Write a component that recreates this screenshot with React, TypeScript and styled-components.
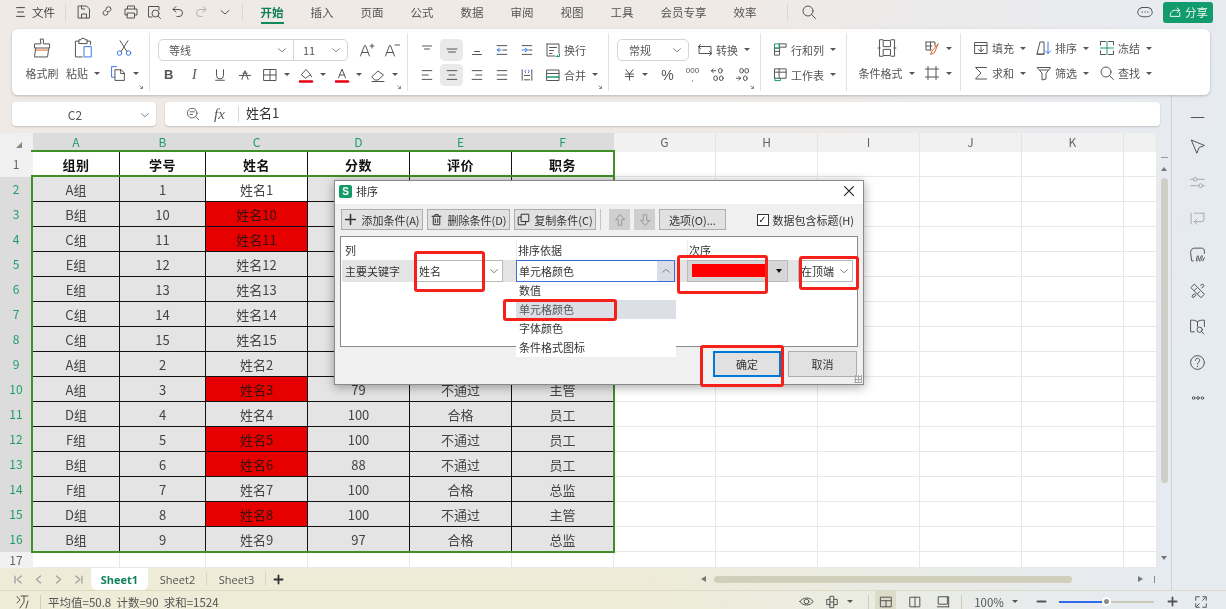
import React from 'react'
import styled, { createGlobalStyle } from 'styled-components'

const GlobalStyle = createGlobalStyle`
  html, body { margin: 0; padding: 0; }
  body { font-family: "Noto Sans CJK SC", "Liberation Sans", sans-serif; color: #444; }
  * { box-sizing: border-box; }
`

const Page = styled.div`
  position: relative;
  width: 1226px;
  height: 609px;
  overflow: hidden;
  display: flex;
  flex-direction: column;
  filter: blur(0.45px);
  background:
    linear-gradient(100deg, rgba(240, 235, 230, 0) 55%, rgba(230, 235, 242, 1) 95%),
    linear-gradient(180deg, #efeae6 0%, #efe8e3 60%, #eeecd6 100%);
`

/* ---------- icons ---------- */

const Svg = styled.svg<{ $size: number }>`
  width: ${p => p.$size}px;
  height: ${p => p.$size}px;
  flex: none;
  fill: none;
  stroke: currentColor;
  stroke-width: 1;
  stroke-linecap: round;
  stroke-linejoin: round;
  * { vector-effect: non-scaling-stroke; }
`

const blue = '#3b78e7'
const red = '#e60012'
const green = '#1a9a6c'
const orange = '#d9662b'

const glyphs: Record<string, React.ReactNode> = {
  menu: <path d="M3 3h9M4 8h7M3 13h9" />,
  save: <><path d="M2.5 2h8l3 3v9h-11z" /><path d="M5.5 14v-4h5v4M5.5 2v3h3" /></>,
  link: <><path d="M7 5.5a2.5 2.5 0 0 1 5-.5c0 1.5-1.2 2.5-2.5 2.5H8" /><path d="M9 8.5a2.5 2.5 0 0 1-5 .5C4 7.5 5.2 6.5 6.5 6.5" /></>,
  print: <><path d="M4.5 5V2h7v3M4.5 11H2V5h12v6h-2.5" /><path d="M4.5 9h7v5h-7z" /></>,
  preview: <><path d="M13 6V2.5H2.5V13H6" /><circle cx="9.5" cy="9.5" r="3.5" /><path d="M12 12l2.5 2.5" /></>,
  undo: <path d="M6 2.5L3 5.5l3 2.5M3 5.5h6a3.5 3.5 0 0 1 0 7H7" />,
  redo: <path d="M10 2.5l3 3-3 2.5M13 5.5H7a3.5 3.5 0 0 0 0 7h2" />,
  chevron: <path d="M4 6.5l4 3.5 4-3.5" />,
  search: <><circle cx="7" cy="7" r="5" /><path d="M10.5 10.5L14.5 14.5" /></>,
  chat: <><path d="M5 3.5h6a4.5 4.5 0 0 1 1 8.8c-1 .7-7 .7-8 0A4.5 4.5 0 0 1 5 3.5z" /><path d="M5 8h.6M7.8 8h.6M10.5 8h.6" /></>,
  share: <path d="M13.5 8.5V13H2.5c0-4 1.5-7 6-7h4M10.5 3.5L13.5 6l-3 2.5" />,
  brush: <><path d="M7 1.5h2v3.5h4.5v3h-11V5H7z" /><path d="M3.5 8L2.5 14.5h9.5l1-6.5" /><path d="M3 9.5h10" stroke={orange} /></>,
  paste: <><path d="M5 3H2.5v11.5h5M11 3h2.5v2.5" /><path d="M5 4.5V2h1.5l.5-1h2l.5 1H11v2.5z" /><path d="M9 7h5v7.5H9z" stroke={blue} /></>,
  cut: <><circle cx="4" cy="12.5" r="2" stroke={blue} /><circle cx="12" cy="12.5" r="2" stroke={blue} /><path d="M5.5 11L11.5 1.5M10.5 11L4.5 1.5" /></>,
  copy: <><path d="M6 1.5H1.5v10H4" stroke={blue} /><path d="M5 4.5h5.5l3 3v7H5z" /><path d="M10 4.5V8h3.5" /></>,
  launcher: <path d="M2 2l6 6M8 3.5V8H3.5" />,
  grow: <path d="M1.5 14L5.5 3.5h1L10.5 14M3 10.5h6M11 4h4M13 2v4" />,
  shrink: <path d="M1.5 14L5.5 3.5h1L10.5 14M3 10.5h6M11 3h4.5" />,
  underline: <path d="M4 2v6.5a4 4 0 0 0 8 0V2M3 14h10" />,
  strike: <path d="M4.5 13L8 3l3.5 10M1.5 8.5h13M5.5 6h5" />,
  border: <path d="M2 2.5h12v11H2zM8 2.5v11M2 8h12" />,
  fill: <><path d="M3.5 7.5L8 2.5l4.5 5L8 11z" /><path d="M12.5 8l1 2" /><path d="M2 14.5h12" stroke={red} strokeWidth="2.5" /></>,
  fontColor: <><path d="M4.5 11L8 2l3.5 9M5.5 8h5" /><path d="M2 14.5h12" stroke={red} strokeWidth="2.5" /></>,
  eraser: <><path d="M2 9.5L8 4l5.5 4-5.5 5H5z" /><path d="M2 14.5h12" /></>,
  alignTop: <path d="M3.5 4h9M5.5 7h5" />,
  alignMid: <path d="M3 7h10M4.5 10h7" />,
  alignBottom: <path d="M5.5 9.5h5M3.5 12.5h9" />,
  indentDec: <><path d="M2.5 3h11M9 8h4.5M2.5 13h11" /><path d="M7 8H2.5M5 6L2.5 8 5 10" stroke={blue} /></>,
  indentInc: <><path d="M2.5 3h11M10 8h3.5M2.5 13h11" /><path d="M2.5 8H8M6 6l2.5 2L6 10" stroke={blue} /></>,
  wrap: <><path d="M2 2h12v9M2 2v12h8M4.5 5.5h7M4.5 8.5h4M4.5 11.5H7" /><path d="M14.5 12v2.5h-3M13 13l-1.5 1.5" stroke={green} /></>,
  left: <path d="M2.5 3h11M2.5 8h7M2.5 13h11" />,
  center: <path d="M2.5 3h11M4.5 8h7M2.5 13h11" />,
  right: <path d="M2.5 3h11M6.5 8h7M2.5 13h11" />,
  justify: <path d="M2.5 3h11M2.5 8h11M2.5 13h11" />,
  distribute: <><path d="M2.5 2v12M13.5 2v12M5 8.5h6M5 13.5h6" /><path d="M6.5 2.5L5.5 4l1 1.5M9.5 2.5L10.5 4l-1 1.5" stroke={blue} /></>,
  merge: <><path d="M2 3h12v10.5H2zM2 6.5h12" /><path d="M2 10h12" stroke={green} strokeWidth="1.5" /></>,
  convert: <path d="M3.5 2.5l-2 2 2 2M1.5 4.5H14V12M12.5 13.5l2-2-2-2M14.5 11.5H2V4.5" />,
  yen: <path d="M3.5 2L8 7.5 12.5 2M3 7.5h10M3 10.5h10M8 7.5V15" />,
  incDec: <><path d="M6 4H1.5M3.5 2L1.5 4l2 2" /><ellipse cx="11" cy="4" rx="2" ry="2.5" /><ellipse cx="6" cy="12" rx="2" ry="2.5" /><ellipse cx="12" cy="12" rx="2" ry="2.5" /></>,
  decDec: <><ellipse cx="7" cy="4" rx="2" ry="2.5" /><ellipse cx="12.5" cy="4" rx="2" ry="2.5" /><path d="M1.5 12H6M4 10l2 2-2 2" /><ellipse cx="11" cy="12" rx="2" ry="2.5" /></>,
  rowCol: <><path d="M7 2h7v3.5H7z" /><path d="M2 6.5h5V14H2zM2 10h5" /><path d="M2 2h5v4.5H2z" stroke={green} /></>,
  sheet: <><path d="M2 2h12v10H2zM2 5.5h12M6.5 2v10" /><path d="M2 11v3.5h6V12" stroke={green} /></>,
  cond: <path d="M5 2H2.5v12H5M11 2h2.5v12H11M1.5 8H3M13 8h1.5M5.5 2.5h5V7h-5zM5.5 9h5v4.5h-5z" />,
  style: <><path d="M2 2h9v4M2 2v8h5M6.5 2v8M2 6h6" /><path d="M14 4L8 11l-1.5 3.5L10 13z" stroke={orange} /></>,
  cropFrame: <path d="M4 1.5v13M12 1.5v13M1.5 4h13M1.5 12h13" />,
  fillDown: <><path d="M2 2.5h12v11H2zM2 5.5h12" /><path d="M8 7v4.5M5.5 9.5L8 11.5l2.5-2" /></>,
  sort: <><path d="M1 14L4 2h4v12zM1 14h7" /><path d="M12 2v11.5M9.5 11l2.500 2.500 2.500-2.500" stroke={blue} /></>,
  freeze: <><path d="M1.5 5V1.5h5M9.5 1.5h5V5M1.5 11v3.5h5M9.5 14.5h5V11" /><path d="M8 1.5v13M1.5 8h13" stroke={green} /></>,
  sum: <path d="M13.5 2.5h-11L8 8l-5.5 6h11" />,
  filter: <path d="M1.5 2.5h13L10 8.500V14l-4 1V8.500zM4 5h8" />,
  dash: <path d="M2 8h12" />,
  cursor: <path d="M2.5 2l12 5-5 2-2 5z" />,
  sliders: <><path d="M1.5 5h3M8 5h6.5M1.5 11h8M13 11h1.5" /><circle cx="6" cy="5" r="1.8" /><circle cx="11" cy="11" r="1.8" /></>,
  flow: <path d="M2 3v10M5 3h9M14 3v6a2 2 0 0 1-2 2H5M7.5 8.500L5 11l2.500 2.500" />,
  ink: <><path d="M4 14H2.5L1.5 6c0-3 2-4 4-4h6c2 0 3 1 3 3v2" /><path d="M7 14c0-3 1-5 1.500-5s.5 5 0 5M10 14c0-2 1-4 2-5s0 5-.5 5M13 14l1.500-3" /></>,
  tools: <path d="M2 5l3-3 9.500 9.500-3 3zM5 8l2-2M8 11l2-2M11 3l2-1 1 1-1 2-1 .5M3 13l2-2 1.500 1.500L4 14.500z" />,
  book: <><path d="M8 3.500C6 2 4 2 1.500 2v11H5M8 3.500C10 2 12 2 14.500 2v6M8 3.500V8" /><circle cx="10" cy="11" r="2.500" /><path d="M12 13l2 2" /></>,
  help: <><circle cx="8" cy="8" r="6.500" /><path d="M6 6a2 2 0 1 1 3.200 1.600C8.400 8.200 8 8.600 8 9.500M8 11.500v.3" /></>,
  dots: <><circle cx="3" cy="8" r="1.500" /><circle cx="8" cy="8" r="1.500" /><circle cx="13" cy="8" r="1.500" /></>,
  statusTag: <path d="M3 2.500L6 6 3 9M7 2h7M10 2v6l-4 6M14 7l-2 7" />,
  eye: <><path d="M1 8c3-5 11-5 14 0-3 5-11 5-14 0z" /><circle cx="8" cy="8" r="2.500" /></>,
  focus: <path d="M6 1.500h4v13H6zM6 5H2v6h4M10 5h4v6h-4M6 8h4" />,
  gridView: <path d="M2 2.500h12v11H2zM2 6.500h12M8 6.500v7" />,
  splitView: <path d="M2.500 2.500h11v11h-11zM8 2.500v11" />,
  pageView: <path d="M3 2h10v8.500H3zM1.500 13.500h13M13 2h1.500v11.500" />,
  minus: <path d="M3 8h10" strokeWidth="1.8" />,
  plus: <path d="M3 8h10M8 3v10" strokeWidth="1.8" />,
  fullscreen: <path d="M2 6V2h4M10 2h4v4M2 10v4h4M14 10v4h-4M3 13l3-3M13 3l-3 3" />,
  zoomFormula: <><circle cx="7" cy="7" r="5.500" /><path d="M4.500 5.500h5M11 11l3.500 3.500M4.500 8.500h3" /></>,
  plusBold: <path d="M2 8h12M8 2v12" strokeWidth="1.6" />,
  trash: <path d="M2.500 4h11M6 4V2h4v2M4 4v10.500h8V4M6.500 7v5M9.500 7v5" />,
  duplicate: <><path d="M5.500 1.500h9v9h-9z" /><path d="M5 5H1.500v9.500h9V11" /></>,
  arrowUp: <path d="M8 2L3 7.500h3V14h4V7.500h3z" />,
  arrowDown: <path d="M8 14L3 8.500h3V2h4v6.500h3z" />,
  close: <path d="M3 3l10 10M13 3L3 13" strokeWidth="1.2" />,
  navFirst: <path d="M3 3v10M12 3L6 8l6 5" strokeWidth="1.3" />,
  navPrev: <path d="M11 3L5 8l6 5" strokeWidth="1.3" />,
  navNext: <path d="M5 3l6 5-6 5" strokeWidth="1.3" />,
  navLast: <path d="M13 3v10M4 3l6 5-6 5" strokeWidth="1.3" />,
}

function Icon({ name, size = 16 }: { name: string; size?: number }) {
  return <Svg $size={size} viewBox="0 0 16 16">{glyphs[name]}</Svg>
}

const Caret = styled.span`
  flex: none;
  width: 0;
  height: 0;
  margin-left: 3px;
  border: 3px solid transparent;
  border-top: 3px solid #555;
  border-bottom: 0;
`

/* ---------- title bar ---------- */

const TitleBar = styled.header`
  height: 29px;
  flex: none;
  display: flex;
  align-items: center;
  padding: 0 13px 5px 14px;
  font-size: 11.5px;
  color: #555;
`

const FileMenu = styled.div`
  width: 42px;
  display: flex;
  align-items: center;
  gap: 4px;
  color: #444;
  white-space: nowrap;
`

const TitleSep = styled.span<{ $l: number; $r: number }>`
  flex: none;
  width: 1px;
  height: 17px;
  margin: 0 ${p => p.$r}px 0 ${p => p.$l}px;
  background: #dbd6d2;
`

const QuickBtn = styled.span<{ $dim?: boolean }>`
  width: 23.5px;
  display: flex;
  justify-content: center;
  color: ${p => (p.$dim ? '#b5b5b5' : '#555')};
`

const MenuTab = styled.span<{ $active?: boolean }>`
  position: relative;
  margin-right: 27px;
  white-space: nowrap;
  font-size: 11.5px;
  line-height: 18px;
  color: ${p => (p.$active ? '#0f7f59' : '#555')};
  font-weight: ${p => (p.$active ? 700 : 400)};
  &::after {
    content: '';
    display: ${p => (p.$active ? 'block' : 'none')};
    position: absolute;
    left: 0;
    right: 0;
    bottom: -3px;
    height: 2px;
    background: #0f8a60;
  }
`

const TitleRight = styled.div`
  margin-left: auto;
  display: flex;
  align-items: center;
  gap: 10px;
  color: #555;
`

const ShareButton = styled.button`
  width: 50px;
  height: 21px;
  border: 0;
  border-radius: 3px;
  background: #129b6c;
  color: #e9f7f1;
  display: flex;
  align-items: center;
  justify-content: center;
  gap: 3px;
  padding: 0;
  font: inherit;
  font-size: 11.5px;
`

/* ---------- ribbon ---------- */

const Ribbon = styled.section`
  flex: none;
  height: 66px;
  margin: 0 16px 0 12px;
  display: flex;
  background: #fff;
  border-radius: 6px;
  box-shadow: 0 1px 3px rgba(0, 0, 0, 0.22);
  font-size: 11px;
  color: #555;
  position: relative;
  z-index: 2;
`

const Group = styled.div<{ $w: number; $last?: boolean }>`
  position: relative;
  flex: none;
  width: ${p => p.$w}px;
  margin: 4px 0;
  padding-top: 4px;
  border-right: ${p => (p.$last ? 'none' : '1px solid #e2e2e2')};
`

const GroupGrid = styled(Group)<{ $cols: string; $pad: number; $gap?: number }>`
  display: grid;
  grid-template-columns: ${p => p.$cols};
  grid-template-rows: 25px 25px;
  column-gap: ${p => p.$gap ?? 0}px;
  padding-left: ${p => p.$pad}px;
`

const ToolRow = styled.div<{ $pad?: number }>`
  height: 25px;
  display: flex;
  align-items: center;
  padding-left: ${p => p.$pad ?? 0}px;
`

const Tool = styled.div<{ $w?: number; $l?: number; $active?: boolean; $start?: boolean }>`
  flex: none;
  width: ${p => (p.$w ? `${p.$w}px` : 'auto')};
  height: 22px;
  margin-left: ${p => p.$l ?? 0}px;
  display: flex;
  align-items: center;
  justify-content: ${p => (p.$start ? 'flex-start' : 'center')};
  gap: 3px;
  white-space: nowrap;
  border-radius: 5px;
  border-left: 1.5px solid transparent;
  border-right: 1.5px solid transparent;
  background-clip: padding-box;
  background-color: ${p => (p.$active ? '#e9e9e9' : 'transparent')};
`

const Launcher = styled.span`
  position: absolute;
  right: 3px;
  bottom: -1px;
  display: flex;
  color: #888;
`

const FontBox = styled.div<{ $w: number; $l: number }>`
  flex: none;
  width: ${p => p.$w}px;
  height: 22px;
  margin-left: ${p => p.$l}px;
  display: flex;
  align-items: center;
  border: 1px solid #d4d4d4;
  border-radius: 5px;
  color: #555;
`

const BoxPart = styled.div<{ $w?: number; $pad: number; $split?: boolean }>`
  flex: ${p => (p.$w ? 'none' : 1)};
  width: ${p => (p.$w ? `${p.$w}px` : 'auto')};
  height: 100%;
  display: flex;
  align-items: center;
  justify-content: space-between;
  padding: 0 4px 0 ${p => p.$pad}px;
  border-left: ${p => (p.$split ? '1px solid #d4d4d4' : 'none')};
  color: #888;
  span { color: #555; }
`

const BoldMark = styled.span`
  font: 700 13px "Liberation Sans", sans-serif;
`

const ItalicMark = styled.span`
  font: italic 14px "Liberation Serif", serif;
`

const Percent = styled.span`
  font: 14px "Liberation Sans", sans-serif;
`

const ThousandMark = styled.span`
  font: 8px/8px "Liberation Sans", sans-serif;
  text-align: center;
`

/* ---------- formula row ---------- */

const Body = styled.div`
  flex: 1;
  display: flex;
  min-height: 0;
`

const Main = styled.div`
  width: 1171px;
  display: flex;
  flex-direction: column;
`

const FormulaRow = styled.div`
  flex: none;
  height: 24px;
  margin: 7px 11px 7px 12px;
  display: flex;
  gap: 9px;
`

const NameBox = styled.div`
  width: 144px;
  position: relative;
  display: flex;
  align-items: center;
  justify-content: center;
  padding-right: 18px;
  background: #fff;
  border-radius: 4px;
  box-shadow: 0 1px 2px rgba(0, 0, 0, 0.18);
  font-size: 12px;
  color: #555;
`

const NameChevron = styled.span`
  position: absolute;
  right: 4px;
  top: 6px;
  display: flex;
  color: #888;
`

const FormulaInput = styled.div`
  flex: 1;
  display: flex;
  align-items: center;
  padding-left: 21px;
  background: #fff;
  border-radius: 4px;
  box-shadow: 0 1px 2px rgba(0, 0, 0, 0.18);
  color: #666;
`

const FxMark = styled.span`
  width: 24px;
  margin-left: 14px;
  font: italic 15px "Liberation Serif", serif;
  color: #555;
`

const FormulaSep = styled.span`
  width: 1px;
  height: 16px;
  margin-right: 7px;
  background: #d8d8d8;
`

const FormulaText = styled.span`
  padding-bottom: 3px;
  font-size: 13px;
  color: #333;
`

/* ---------- sheet ---------- */

const SheetWrap = styled.div`
  flex: none;
  height: 435px;
  display: flex;
`

const SheetGrid = styled.div`
  position: relative;
  width: 1157px;
  background: #fff;
  display: grid;
  grid-template-columns: 33px 87px 86px repeat(9, 102px) 33px;
  grid-template-rows: 19px repeat(16, 25px) 16px;
  overflow: hidden;
`

const Corner = styled.div`
  background: #f0f0f0;
  display: flex;
  align-items: flex-end;
  justify-content: center;
  padding: 0 0 4px 4px;
  &::after {
    content: '';
    border: 3px solid transparent;
    border-right-color: #888;
    border-bottom-color: #888;
  }
`

const ColHead = styled.div<{ $on: boolean }>`
  display: flex;
  align-items: center;
  justify-content: center;
  padding-bottom: 2px;
  font-size: 12px;
  background: ${p => (p.$on ? '#dcdcdc' : '#f1f1f1')};
  color: ${p => (p.$on ? '#1f9c6e' : '#666')};
  border-right: 1px solid ${p => (p.$on ? '#dcdcdc' : '#e4e4e4')};
`

const RowHead = styled.div<{ $on: boolean }>`
  display: flex;
  align-items: center;
  justify-content: center;
  padding: 0 1px 2px 0;
  font-size: 12px;
  background: ${p => (p.$on ? '#dcdcdc' : '#f1f1f1')};
  color: ${p => (p.$on ? '#1f9c6e' : '#666')};
`

const cellBackgrounds = { head: '#fff', plain: '#e4e4e4', white: '#fff', red: '#e60000', blank: '#fff' }

const Cell = styled.div<{ $tone: keyof typeof cellBackgrounds }>`
  display: flex;
  align-items: center;
  justify-content: center;
  white-space: nowrap;
  font-size: 13px;
  font-weight: ${p => (p.$tone === 'head' ? 700 : 400)};
  letter-spacing: ${p => (p.$tone === 'head' ? '0.5px' : 0)};
  color: ${p => (p.$tone === 'head' ? '#111' : p.$tone === 'red' ? '#3a1010' : '#444')};
  background: ${p => cellBackgrounds[p.$tone]};
  border-right: 1px solid ${p => (p.$tone === 'blank' ? '#e8e8e8' : '#111')};
  border-bottom: 1px solid ${p => (p.$tone === 'blank' ? '#e8e8e8' : '#111')};
`

const HeaderOutline = styled.div`
  position: absolute;
  left: 31px;
  top: 17px;
  width: 584px;
  height: 26px;
  border-top: 2px solid #3f8f28;
  border-right: 2px solid #3f8f28;
`

const RangeOutline = styled.div`
  position: absolute;
  left: 31px;
  top: 42px;
  width: 584px;
  height: 378px;
  border: 2.5px solid #3f8f28;
`

const VScroll = styled.div`
  width: 14px;
  display: flex;
  flex-direction: column;
  align-items: center;
  color: #888;
`

const ScrollDash = styled.span`
  width: 7px;
  height: 1px;
  margin-top: 24px;
  background: #999;
`

const ScrollArrow = styled.span<{ $down?: boolean }>`
  width: 0;
  height: 0;
  margin-top: ${p => (p.$down ? 'auto' : '9px')};
  margin-bottom: ${p => (p.$down ? '8px' : 0)};
  border: 3.5px solid transparent;
  border-top: ${p => (p.$down ? '4px solid #777' : 0)};
  border-bottom: ${p => (p.$down ? 0 : '4px solid #777')};
`

const ScrollThumb = styled.span`
  width: 7px;
  height: 305px;
  margin-top: 7px;
  border-radius: 4px;
  background: #cfcfc8;
`

/* ---------- sheet tabs ---------- */

const TabsBar = styled.div`
  flex: none;
  height: 22px;
  display: flex;
  align-items: center;
  padding-left: 8px;
  font-size: 11px;
  color: #555;
`

const NavBtn = styled.span`
  width: 20px;
  display: flex;
  justify-content: center;
  color: #a0a0a0;
`

const SheetTab = styled.div<{ $active?: boolean; $sep?: boolean }>`
  width: ${p => (p.$active ? 57 : 59)}px;
  height: 100%;
  display: flex;
  align-items: center;
  justify-content: center;
  margin-left: ${p => (p.$active ? '3px' : 0)};
  font-family: "Open Sans", sans-serif;
  font-weight: ${p => (p.$active ? 700 : 400)};
  color: ${p => (p.$active ? '#12805c' : '#555')};
  background: ${p => (p.$active ? '#fff' : 'transparent')};
  border-radius: 0 0 6px 6px;
  position: relative;
  &::after {
    content: '';
    display: ${p => (p.$sep ? 'block' : 'none')};
    position: absolute;
    right: 0;
    top: 4px;
    bottom: 4px;
    width: 1px;
    background: #d9d4c8;
  }
`

const AddSheet = styled.span`
  margin-left: 2px;
  width: 20px;
  display: flex;
  justify-content: center;
  color: #333;
`

const HScroll = styled.div`
  margin-left: auto;
  width: 476px;
  display: flex;
  align-items: center;
  color: #777;
`

const HArrow = styled.span<{ $right?: boolean }>`
  flex: none;
  width: 0;
  height: 0;
  margin: ${p => (p.$right ? '0 0 0 6px' : '0 8px 0 6px')};
  border: 3.5px solid transparent;
  border-left: ${p => (p.$right ? '5px solid #777' : 0)};
  border-right: ${p => (p.$right ? 0 : '5px solid #777')};
`

const HTrack = styled.div`
  width: 418px;
  display: flex;
`

const HThumb = styled.span`
  width: 358px;
  height: 7px;
  border-radius: 4px;
  background: #cfcfbb;
`

const HEnd = styled.span`
  width: 1px;
  height: 7px;
  margin-left: 11px;
  background: #888;
`

/* ---------- right sidebar ---------- */

const Sidebar = styled.aside`
  flex: 1;
  border-left: 1px solid #d4d2cc;
  display: flex;
  flex-direction: column;
  align-items: center;
  padding: 11px 3px 0 0;
  color: #555;
`

const SideBtn = styled.span<{ $h: number; $dim?: boolean }>`
  height: ${p => p.$h}px;
  display: flex;
  align-items: center;
  justify-content: center;
  color: ${p => (p.$dim ? '#aaa' : '#555')};
`

/* ---------- status bar ---------- */

const StatusBar = styled.footer`
  flex: none;
  height: 19px;
  display: flex;
  align-items: center;
  padding: 0 14px;
  font-size: 11.5px;
  color: #555;
  border-top: 1px solid #dcdac4;
`

const StatusSep = styled.span<{ $l: number; $r: number }>`
  flex: none;
  width: 1px;
  height: 14px;
  margin: 3px ${p => p.$r}px 0 ${p => p.$l}px;
  background: #cfcdb8;
`

const StatusText = styled.span`
  padding-top: 3px;
  white-space: pre;
`

const StatusTag = styled.span`
  display: flex;
  padding-top: 3px;
`

const StatusRight = styled.div`
  margin-left: auto;
  display: flex;
  align-items: center;
  height: 100%;
`

const StatusCell = styled.span<{ $w: number; $active?: boolean }>`
  flex: none;
  width: ${p => p.$w}px;
  height: 100%;
  padding-top: 3px;
  display: flex;
  align-items: center;
  justify-content: center;
  background: ${p => (p.$active ? '#dcdcc8' : 'transparent')};
  gap: 5px;
`

const ZoomSlider = styled.div`
  position: relative;
  width: 95px;
  height: 2px;
  margin: 3px 0 0 7px;
  background: linear-gradient(90deg, #2f6bed 0 50%, #c9c9b8 50% 100%);
`

const ZoomKnob = styled.span`
  position: absolute;
  left: 43px;
  top: -4px;
  width: 9px;
  height: 9px;
  border-radius: 50%;
  background: #8b8b8b;
  border: 2px solid #fff;
`

/* ---------- dialog ---------- */

const Dialog = styled.div`
  position: absolute;
  left: 334px;
  top: 180px;
  width: 530px;
  height: 205px;
  z-index: 5;
  display: flex;
  flex-direction: column;
  background: #f0f0f0;
  border: 1px solid #8a8a8a;
  box-shadow: 0 2px 10px rgba(0, 0, 0, 0.35);
  font-size: 11px;
  color: #333;
`

const DialogTitle = styled.div`
  flex: none;
  height: 23px;
  display: flex;
  align-items: center;
  padding: 0 5px 3px 4px;
  background: #fff;
  gap: 4px;
  color: #333;
`

const AppLogo = styled.span`
  width: 13px;
  height: 13px;
  border-radius: 2px;
  background: #149a66;
  color: #fff;
  display: flex;
  align-items: center;
  justify-content: center;
  font: 700 10px "Liberation Sans", sans-serif;
`

const CloseBtn = styled.span`
  margin-left: auto;
  margin-right: 2px;
  display: flex;
  color: #222;
`

const DialogBar = styled.div`
  flex: none;
  height: 21px;
  margin-top: 5px;
  padding: 0 9px 0 6px;
  display: flex;
  align-items: stretch;
  gap: 4px;
`

const BarButton = styled.div<{ $w: number; $disabled?: boolean }>`
  flex: none;
  width: ${p => p.$w}px;
  display: flex;
  align-items: center;
  justify-content: center;
  gap: 4px;
  white-space: nowrap;
  background: ${p => (p.$disabled ? '#cfcfcf' : '#e1e1e1')};
  border: 1px solid ${p => (p.$disabled ? '#cfcfcf' : '#adadad')};
  color: ${p => (p.$disabled ? '#9a9a9a' : '#333')};
`

const BarSep = styled.span`
  flex: none;
  width: 1px;
  margin: 0 4px 0 0;
  background: #c4c4c4;
`

const CheckLabel = styled.label`
  margin-left: auto;
  display: flex;
  align-items: center;
  gap: 4px;
  white-space: nowrap;
`

const CheckBox = styled.span`
  width: 12px;
  height: 12px;
  border: 1px solid #333;
  background: #fff;
  display: flex;
  align-items: center;
  justify-content: center;
  color: #222;
  font: 10px "DejaVu Sans", sans-serif;
`

const Panel = styled.div`
  flex: none;
  height: 111px;
  margin: 6px 5px 0 5px;
  background: #fff;
  border: 1px solid #8a8a8a;
`

const PanelHead = styled.div`
  height: 23px;
  display: grid;
  grid-template-columns: 175px 171px 1fr;
  align-items: center;
  padding-top: 2px;
`

const PanelHeadCell = styled.span`
  height: 100%;
  display: flex;
  align-items: center;
  padding-left: 1px;
  padding-top: 1px;
  border-left: 1px solid #ededed;
  &:first-child { border-left: 0; padding-left: 4px; }
`

const SortRow = styled.div`
  height: 22px;
  margin: 0 5px 0 1px;
  display: flex;
  background: #e4e4e4;
`

const SortLabel = styled.span`
  flex: none;
  width: 74px;
  padding: 0 0 1px 3px;
  display: flex;
  align-items: center;
`

const SelectField = styled.div<{ $w: number; $l: number; $focus?: boolean; $gray?: boolean }>`
  position: relative;
  flex: none;
  width: ${p => p.$w}px;
  margin-left: ${p => p.$l}px;
  display: flex;
  align-items: center;
  padding: 0 0 1px 2px;
  background: ${p => (p.$gray ? '#d6d6d6' : '#fff')};
  border: 1px solid ${p => (p.$focus ? '#3b6fd4' : '#b9b9b9')};
`

const SelectArrow = styled.span<{ $shade?: boolean }>`
  position: absolute;
  right: 0;
  top: 0;
  bottom: 0;
  width: 17px;
  display: flex;
  align-items: center;
  justify-content: center;
  color: #888;
  background: ${p => (p.$shade ? '#d9dde8' : 'transparent')};
`

const FlippedChevron = styled.span`
  display: flex;
  transform: rotate(180deg);
`

const ColorSwatch = styled.span`
  width: 76px;
  height: 13px;
  margin-left: 2px;
  background: #fe0000;
`

const SolidArrow = styled(SelectArrow)`
  &::after {
    content: '';
    border: 3.5px solid transparent;
    border-top: 4px solid #111;
    border-bottom: 0;
  }
`

const OptionList = styled.ul`
  position: absolute;
  left: -1px;
  top: 21px;
  width: 160px;
  margin: 0;
  padding: 0;
  list-style: none;
  background: #fff;
  z-index: 1;
`

const OptionItem = styled.li<{ $hover?: boolean }>`
  height: 19px;
  padding: 0 0 2px 3px;
  display: flex;
  align-items: center;
  background: ${p => (p.$hover ? '#dcdfe6' : 'transparent')};
  color: ${p => (p.$hover ? '#555' : '#333')};
  &:first-child { height: 18px; }
`

const DialogActions = styled.div`
  flex: none;
  height: 26px;
  margin-top: 4px;
  padding-right: 6px;
  display: flex;
  justify-content: flex-end;
  gap: 7px;
`

const ActionButton = styled.button<{ $primary?: boolean }>`
  width: ${p => (p.$primary ? 68 : 69)}px;
  padding: 0;
  background: #e1e1e1;
  border: ${p => (p.$primary ? '2px solid #0078d7' : '1px solid #adadad')};
  color: #333;
  font: inherit;
`

const Grip = styled.span`
  position: absolute;
  right: 1px;
  bottom: 1px;
  width: 8px;
  height: 8px;
  background: radial-gradient(circle, #a8a8a8 1px, transparent 1.2px) 0 0 / 3px 3px;
`

const Mark = styled.span<{ $x: number; $y: number; $w: number; $h: number }>`
  position: absolute;
  left: ${p => p.$x - 335}px;
  top: ${p => p.$y - 181}px;
  width: ${p => p.$w}px;
  height: ${p => p.$h}px;
  border: 3px solid #f5201a;
  border-radius: 3px;
  pointer-events: none;
  z-index: 3;
`

/* ---------- data ---------- */

const columns = ['A', 'B', 'C', 'D', 'E', 'F', 'G', 'H', 'I', 'J', 'K', '']

const headers = ['组别', '学号', '姓名', '分数', '评价', '职务']

const rows: string[][] = [
  ['A组', '1', '姓名1', '', '', ''],
  ['B组', '10', '姓名10', '', '', ''],
  ['C组', '11', '姓名11', '', '', ''],
  ['E组', '12', '姓名12', '', '', ''],
  ['E组', '13', '姓名13', '', '', ''],
  ['C组', '14', '姓名14', '', '', ''],
  ['C组', '15', '姓名15', '', '', ''],
  ['A组', '2', '姓名2', '', '', ''],
  ['A组', '3', '姓名3', '79', '不通过', '主管'],
  ['D组', '4', '姓名4', '100', '合格', '员工'],
  ['F组', '5', '姓名5', '100', '不通过', '员工'],
  ['B组', '6', '姓名6', '88', '不通过', '员工'],
  ['F组', '7', '姓名7', '100', '合格', '总监'],
  ['D组', '8', '姓名8', '100', '不通过', '主管'],
  ['B组', '9', '姓名9', '97', '合格', '总监'],
]

const redRows = [3, 4, 10, 12, 13, 15]

const menuTabs = ['开始', '插入', '页面', '公式', '数据', '审阅', '视图', '工具', '会员专享', '效率']

const sideIcons: [string, number, boolean?][] = [
  ['dash', 22],
  ['cursor', 36],
  ['sliders', 36, true],
  ['flow', 36, true],
  ['ink', 36],
  ['tools', 36],
  ['book', 36],
  ['help', 36],
  ['dots', 36],
]

function Sheet() {
  return (
    <SheetGrid>
      <Corner />
      {columns.map((c, i) => <ColHead key={i} $on={i < 6}>{c}</ColHead>)}

      <RowHead $on={false}>1</RowHead>
      {columns.map((_, i) =>
        i < 6
          ? <Cell key={i} $tone="head">{headers[i]}</Cell>
          : <Cell key={i} $tone="blank" />
      )}

      {rows.map((row, r) => {
        const rowNo = r + 2
        return (
          <React.Fragment key={rowNo}>
            <RowHead $on>{rowNo}</RowHead>
            {columns.map((_, i) => {
              if (i >= 6) return <Cell key={i} $tone="blank" />
              let tone: 'plain' | 'white' | 'red' = 'plain'
              if (i === 2 && rowNo === 2) tone = 'white'
              if (i === 2 && redRows.includes(rowNo)) tone = 'red'
              return <Cell key={i} $tone={tone}>{row[i]}</Cell>
            })}
          </React.Fragment>
        )
      })}

      <RowHead $on={false}>17</RowHead>
      {columns.map((_, i) => <Cell key={i} $tone="blank" />)}

      <HeaderOutline />
      <RangeOutline />
    </SheetGrid>
  )
}

function SortDialog() {
  return (
    <Dialog>
      <DialogTitle>
        <AppLogo>S</AppLogo>
        排序
        <CloseBtn><Icon name="close" size={14} /></CloseBtn>
      </DialogTitle>

      <DialogBar>
        <BarButton $w={82}><Icon name="plusBold" size={13} />添加条件(A)</BarButton>
        <BarButton $w={83}><Icon name="trash" size={13} />删除条件(D)</BarButton>
        <BarButton $w={82}><Icon name="duplicate" size={13} />复制条件(C)</BarButton>
        <BarSep />
        <BarButton $w={21} $disabled><Icon name="arrowUp" size={14} /></BarButton>
        <BarButton $w={21} $disabled><Icon name="arrowDown" size={14} /></BarButton>
        <BarButton $w={67}>选项(O)...</BarButton>
        <CheckLabel><CheckBox>✓</CheckBox>数据包含标题(H)</CheckLabel>
      </DialogBar>

      <Panel>
        <PanelHead>
          <PanelHeadCell>列</PanelHeadCell>
          <PanelHeadCell>排序依据</PanelHeadCell>
          <PanelHeadCell>次序</PanelHeadCell>
        </PanelHead>
        <SortRow>
          <SortLabel>主要关键字</SortLabel>
          <SelectField $w={87} $l={0}>
            姓名
            <SelectArrow><Icon name="chevron" size={14} /></SelectArrow>
          </SelectField>
          <SelectField $w={159} $l={13} $focus>
            单元格颜色
            <SelectArrow $shade><FlippedChevron><Icon name="chevron" size={14} /></FlippedChevron></SelectArrow>
            <OptionList>
              <OptionItem>数值</OptionItem>
              <OptionItem $hover>单元格颜色</OptionItem>
              <OptionItem>字体颜色</OptionItem>
              <OptionItem>条件格式图标</OptionItem>
            </OptionList>
          </SelectField>
          <SelectField $w={101} $l={12} $gray>
            <ColorSwatch />
            <SolidArrow />
          </SelectField>
          <SelectField $w={55} $l={10}>
            在顶端
            <SelectArrow><Icon name="chevron" size={14} /></SelectArrow>
          </SelectField>
        </SortRow>
      </Panel>

      <DialogActions>
        <ActionButton $primary>确定</ActionButton>
        <ActionButton>取消</ActionButton>
      </DialogActions>
      <Grip />

      <Mark $x={414} $y={251} $w={71} $h={41} />
      <Mark $x={677} $y={255} $w={91} $h={39} />
      <Mark $x={799} $y={256} $w={60} $h={34} />
      <Mark $x={503} $y={299} $w={114} $h={22} />
      <Mark $x={700} $y={345} $w={84} $h={42} />
    </Dialog>
  )
}

export default function App() {
  return (
    <Page>
      <GlobalStyle />

      <TitleBar>
        <FileMenu><Icon name="menu" size={14} />文件</FileMenu>
        <TitleSep $l={9} $r={6} />
        <QuickBtn><Icon name="save" /></QuickBtn>
        <QuickBtn><Icon name="link" /></QuickBtn>
        <QuickBtn><Icon name="print" /></QuickBtn>
        <QuickBtn><Icon name="preview" /></QuickBtn>
        <QuickBtn><Icon name="undo" /></QuickBtn>
        <QuickBtn $dim><Icon name="redo" /></QuickBtn>
        <QuickBtn><Icon name="chevron" /></QuickBtn>
        <TitleSep $l={5} $r={18} />
        {menuTabs.map((t, i) => <MenuTab key={t} $active={i === 0}>{t}</MenuTab>)}
        <TitleSep $l={3} $r={10} />
        <QuickBtn><Icon name="search" /></QuickBtn>
        <TitleRight>
          <Icon name="chat" />
          <ShareButton><Icon name="share" size={14} />分享</ShareButton>
        </TitleRight>
      </TitleBar>

      <Ribbon>
        <GroupGrid $w={138} $cols="36px 34px 36px" $pad={12} $gap={6}>
          <Tool><Icon name="brush" size={22} /></Tool>
          <Tool><Icon name="paste" size={22} /></Tool>
          <Tool><Icon name="cut" size={18} /></Tool>
          <Tool>格式刷</Tool>
          <Tool>粘贴<Caret /></Tool>
          <Tool><Icon name="copy" size={17} /><Caret /></Tool>
          <Launcher><Icon name="launcher" size={7} /></Launcher>
        </GroupGrid>

        <Group $w={258}>
          <ToolRow>
            <FontBox $w={190} $l={8}>
              <BoxPart $pad={10}><span>等线</span><Icon name="chevron" size={14} /></BoxPart>
              <BoxPart $w={54} $pad={9} $split><span>11</span><Icon name="chevron" size={14} /></BoxPart>
            </FontBox>
            <Tool $w={25} $l={6}><Icon name="grow" /></Tool>
            <Tool $w={25}><Icon name="shrink" /></Tool>
          </ToolRow>
          <ToolRow $pad={6}>
            <Tool $w={25.5}><BoldMark>B</BoldMark></Tool>
            <Tool $w={25.5}><ItalicMark>I</ItalicMark></Tool>
            <Tool $w={25.5}><Icon name="underline" size={14} /></Tool>
            <Tool $w={25.5}><Icon name="strike" size={14} /></Tool>
            <Tool $w={36}><Icon name="border" /><Caret /></Tool>
            <Tool $w={36}><Icon name="fill" /><Caret /></Tool>
            <Tool $w={36}><Icon name="fontColor" /><Caret /></Tool>
            <Tool $w={36}><Icon name="eraser" /><Caret /></Tool>
          </ToolRow>
          <Launcher><Icon name="launcher" size={7} /></Launcher>
        </Group>

        <Group $w={201}>
          <ToolRow $pad={6}>
            <Tool $w={25}><Icon name="alignTop" /></Tool>
            <Tool $w={25} $active><Icon name="alignMid" /></Tool>
            <Tool $w={25}><Icon name="alignBottom" /></Tool>
            <Tool $w={25}><Icon name="indentDec" size={14} /></Tool>
            <Tool $w={25}><Icon name="indentInc" size={14} /></Tool>
            <Tool $l={5}><Icon name="wrap" />换行</Tool>
          </ToolRow>
          <ToolRow $pad={6}>
            <Tool $w={25}><Icon name="left" size={14} /></Tool>
            <Tool $w={25} $active><Icon name="center" size={14} /></Tool>
            <Tool $w={25}><Icon name="right" size={14} /></Tool>
            <Tool $w={25}><Icon name="justify" size={14} /></Tool>
            <Tool $w={25}><Icon name="distribute" size={14} /></Tool>
            <Tool $l={5}><Icon name="merge" />合并<Caret /></Tool>
          </ToolRow>
          <Launcher><Icon name="launcher" size={7} /></Launcher>
        </Group>

        <Group $w={152}>
          <ToolRow>
            <FontBox $w={72} $l={8}>
              <BoxPart $pad={11}><span>常规</span><Icon name="chevron" size={14} /></BoxPart>
            </FontBox>
            <Tool $l={7}><Icon name="convert" />转换<Caret /></Tool>
          </ToolRow>
          <ToolRow $pad={6}>
            <Tool $w={40}><Icon name="yen" size={13} /><Caret /></Tool>
            <Tool $w={25}><Percent>%</Percent></Tool>
            <Tool $w={25}><ThousandMark>000<br />,</ThousandMark></Tool>
            <Tool $w={25}><Icon name="incDec" size={15} /></Tool>
            <Tool $w={25}><Icon name="decDec" size={15} /></Tool>
          </ToolRow>
          <Launcher><Icon name="launcher" size={7} /></Launcher>
        </Group>

        <Group $w={86}>
          <ToolRow $pad={11}>
            <Tool $start><Icon name="rowCol" size={15} />行和列<Caret /></Tool>
          </ToolRow>
          <ToolRow $pad={11}>
            <Tool $start><Icon name="sheet" size={15} />工作表<Caret /></Tool>
          </ToolRow>
        </Group>

        <GroupGrid $w={114} $cols="65px 38px" $pad={7}>
          <Tool><Icon name="cond" size={22} /></Tool>
          <Tool><Icon name="style" /><Caret /></Tool>
          <Tool>条件格式<Caret /></Tool>
          <Tool><Icon name="cropFrame" /><Caret /></Tool>
        </GroupGrid>

        <GroupGrid $w={249} $cols="63px 63px 63px" $pad={11} $last>
          <Tool $start><Icon name="fillDown" />填充<Caret /></Tool>
          <Tool $start><Icon name="sort" />排序<Caret /></Tool>
          <Tool $start><Icon name="freeze" />冻结<Caret /></Tool>
          <Tool $start><Icon name="sum" />求和<Caret /></Tool>
          <Tool $start><Icon name="filter" />筛选<Caret /></Tool>
          <Tool $start><Icon name="search" />查找<Caret /></Tool>
        </GroupGrid>
      </Ribbon>

      <Body>
        <Main>
          <FormulaRow>
            <NameBox>C2<NameChevron><Icon name="chevron" size={14} /></NameChevron></NameBox>
            <FormulaInput>
              <Icon name="zoomFormula" size={14} />
              <FxMark>fx</FxMark>
              <FormulaSep />
              <FormulaText>姓名1</FormulaText>
            </FormulaInput>
          </FormulaRow>

          <SheetWrap>
            <Sheet />
            <VScroll>
              <ScrollDash />
              <ScrollArrow />
              <ScrollThumb />
              <ScrollArrow $down />
            </VScroll>
          </SheetWrap>

          <TabsBar>
            <NavBtn><Icon name="navFirst" size={11} /></NavBtn>
            <NavBtn><Icon name="navPrev" size={11} /></NavBtn>
            <NavBtn><Icon name="navNext" size={11} /></NavBtn>
            <NavBtn><Icon name="navLast" size={11} /></NavBtn>
            <SheetTab $active>Sheet1</SheetTab>
            <SheetTab $sep>Sheet2</SheetTab>
            <SheetTab $sep>Sheet3</SheetTab>
            <AddSheet><Icon name="plus" size={13} /></AddSheet>
            <HScroll>
              <HArrow />
              <HTrack><HThumb /></HTrack>
              <HArrow $right />
              <HEnd />
            </HScroll>
          </TabsBar>
        </Main>

        <Sidebar>
          {sideIcons.map(([name, h, dim]) => (
            <SideBtn key={name} $h={h} $dim={dim}><Icon name={name} size={name === 'dots' ? 14 : 17} /></SideBtn>
          ))}
        </Sidebar>
      </Body>

      <StatusBar>
        <StatusTag><Icon name="statusTag" /></StatusTag>
        <StatusSep $l={10} $r={7} />
        <StatusText>平均值=50.8  计数=90  求和=1524</StatusText>
        <StatusRight>
          <StatusCell $w={18}><Icon name="eye" size={15} /></StatusCell>
          <StatusCell $w={47}><Icon name="focus" size={14} /><Caret /></StatusCell>
          <StatusSep $l={6} $r={6} />
          <StatusCell $w={21} $active><Icon name="gridView" size={14} /></StatusCell>
          <StatusCell $w={38}><Icon name="splitView" size={14} /></StatusCell>
          <StatusCell $w={18}><Icon name="pageView" size={14} /></StatusCell>
          <StatusSep $l={9} $r={0} />
          <StatusCell $w={68}>100%<Caret /></StatusCell>
          <StatusCell $w={22}><Icon name="minus" size={13} /></StatusCell>
          <ZoomSlider><ZoomKnob /></ZoomSlider>
          <StatusCell $w={36}><Icon name="plus" size={13} /></StatusCell>
          <StatusCell $w={22}><Icon name="fullscreen" size={14} /></StatusCell>
        </StatusRight>
      </StatusBar>

      <SortDialog />
    </Page>
  )
}
